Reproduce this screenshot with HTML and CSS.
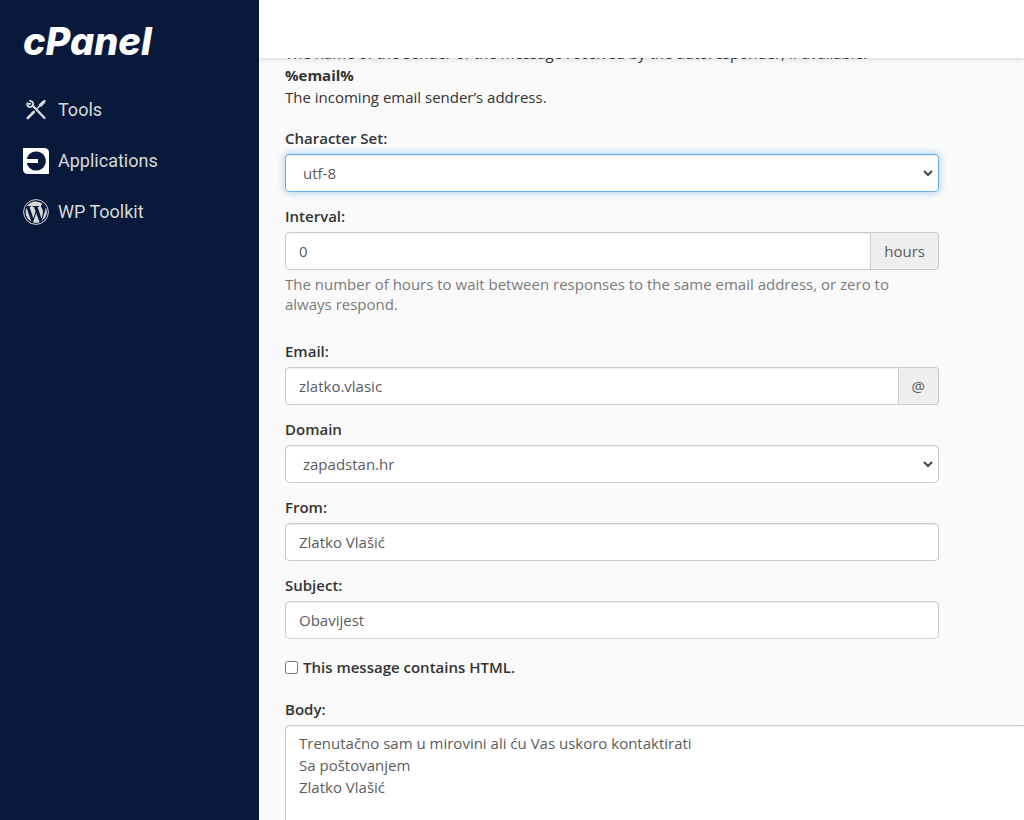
FILE: index.html
```html
<!DOCTYPE html>
<html lang="en">
<head>
<meta charset="utf-8">
<title>cPanel</title>
<link rel="stylesheet" href="styles.css">
</head>
<body>
<div class="app">
  <aside class="sidebar">
    <a class="logo" href="#">cPanel</a>
    <nav class="nav">
      <a class="nav-link" href="#">
        <svg class="nav-icon" viewBox="0 0 26 26" fill="none" stroke="#d9d9d9" aria-hidden="true">
          <path d="M9.5 8.5 21.5 21" stroke-width="2.4" stroke-linecap="round"/>
          <path d="M4.2 6.4c-.6 2.3 1.5 4.2 3.7 3.5 2.3-.6 3.1-3.1 1.7-4.8-.8-1-1.8-1.3-2.6-1.2" stroke-width="1.8" stroke-linecap="round"/>
          <path d="M4.3 6.2 6.7 7.3 7.7 6" stroke-width="1.5"/>
          <path d="M4.8 21 10.8 15" stroke-width="2.6" stroke-linecap="round"/>
          <path d="M14 11.8 17.5 8.3" stroke-width="1.6"/>
          <path d="M16.2 7.6 20 4 22.2 3.4 21.7 5.7 18 9.5Z" fill="#d9d9d9" stroke-width="1" stroke-linejoin="round"/>
        </svg>
        <span>Tools</span>
      </a>
      <a class="nav-link" href="#">
        <svg class="nav-icon" viewBox="0 0 26 26" aria-hidden="true">
          <path d="M0 0H21.5A4.5 4.5 0 0 1 26 4.5V26H4.5A4.5 4.5 0 0 1 0 21.5Z" fill="#fff"/>
          <path d="M3.8 11A9.6 9.6 0 1 1 3.8 15H15V11Z" fill="#08193b"/>
          <path d="M3 11.2H14.5V14.8H3Z" fill="#fff"/>
        </svg>
        <span>Applications</span>
      </a>
      <a class="nav-link" href="#">
        <svg class="nav-icon" viewBox="0 0 26 26" aria-hidden="true">
          <circle cx="13" cy="13" r="12.4" fill="none" stroke="#d9d9d9" stroke-width="1"/>
          <path fill="#d9d9d9" d="M3.6 8.7A10.8 10.8 0 0 0 8.3 22.7ZM19.9 12.4c0-1.3-.5-2.2-.9-2.9-.5-.9-1-1.6-1-2.5 0-1 .7-1.900 1.800-1.900h.1A10.800 10.800 0 0 0 4 7.100h.7c1.100 0 2.900-.1 2.900-.1.600 0 .6.800.1.900l-1.200.1 3.800 11.500 2.300-6.900L11 8l-1.100-.1c-.6 0-.5-.9.100-.9 0 0 1.700.1 2.800.1 1.100 0 2.900-.1 2.900-.1.600 0 .6.800.1.900l-1.200.1 3.800 11.400 1.100-3.500c.4-1.400.4-2.500.4-3.500ZM13.200 13.900 10 23.400c2.200.6 4.500.5 6.600-.2ZM22.500 7.800c.3 1.900-.2 3.700-.7 5.200l-3.300 9.300A10.800 10.800 0 0 0 22.500 7.800Z"/>
        </svg>
        <span>WP Toolkit</span>
      </a>
    </nav>
  </aside>
  <div class="main">
    <header class="topbar"></header>
    <main class="content">
      <dl class="tags">
        <dd>The name of the sender of the message received by the autoresponder, if available.</dd>
        <dt>%email%</dt>
        <dd>The incoming email sender’s address.</dd>
      </dl>
      <form class="form">
        <div class="field">
          <label for="charset">Character Set:</label>
          <div class="select-wrap">
            <select class="control focused" id="charset"><option>utf-8</option></select>
            <svg class="chevron" viewBox="0 0 10 6" aria-hidden="true"><path d="M1 1 5 5 9 1"/></svg>
          </div>
        </div>
        <div class="field">
          <label for="interval">Interval:</label>
          <div class="group">
            <input class="control" id="interval" type="text" value="0">
            <span class="addon">hours</span>
          </div>
          <p class="help">The number of hours to wait between responses to the same email address, or zero to always respond.</p>
        </div>
        <div class="field">
          <label for="email">Email:</label>
          <div class="group">
            <input class="control" id="email" type="text" value="zlatko.vlasic">
            <span class="addon">@</span>
          </div>
        </div>
        <div class="field">
          <label for="domain">Domain</label>
          <div class="select-wrap">
            <select class="control" id="domain"><option>zapadstan.hr</option></select>
            <svg class="chevron" viewBox="0 0 10 6" aria-hidden="true"><path d="M1 1 5 5 9 1"/></svg>
          </div>
        </div>
        <div class="field">
          <label for="from">From:</label>
          <input class="control" id="from" type="text" value="Zlatko Vlašić">
        </div>
        <div class="field">
          <label for="subject">Subject:</label>
          <input class="control" id="subject" type="text" value="Obavijest">
        </div>
        <div class="check">
          <input id="html" type="checkbox">
          <label for="html">This message contains HTML.</label>
        </div>
        <div class="field field-body">
          <label for="body">Body:</label>
          <textarea class="control" id="body">Trenutačno sam u mirovini ali ću Vas uskoro kontaktirati
Sa poštovanjem
Zlatko Vlašić</textarea>
        </div>
      </form>
    </main>
  </div>
</div>
</body>
</html>
```
FILE: styles.css
```css
* {
  box-sizing: border-box;
}

body {
  margin: 0;
  font: 15px/22px "Open Sans", "Noto Sans", sans-serif;
  color: #333;
  background: #fafafa;
}

.app {
  display: flex;
  height: 100vh;
  overflow: hidden;
}

.sidebar {
  flex: 0 0 259px;
  padding: 19px 23px;
  background: #08193b;
}

.logo {
  display: block;
  color: #fff;
  font: italic 800 38px/44px Inter, sans-serif;
  text-decoration: none;
}

.nav {
  display: flex;
  flex-direction: column;
  gap: 25px;
  margin-top: 34px;
}

.nav-link {
  display: flex;
  align-items: center;
  gap: 9px;
  color: #d9d9d9;
  font: 18px/26px Roboto, sans-serif;
  text-decoration: none;
}

.nav-icon {
  width: 26px;
  height: 26px;
}

.main {
  flex: 1;
  min-width: 0;
  display: flex;
  flex-direction: column;
}

.topbar {
  flex: 0 0 58px;
  position: relative;
  z-index: 1;
  background: #fff;
  box-shadow: 0 1px 5px rgba(0, 0, 0, 0.15);
}

.content {
  flex: 1;
  display: flex;
  flex-direction: column;
  margin-top: -16px;
  padding-left: 26px;
}

.tags {
  margin: 0 0 19px;
}

.tags dt {
  font-weight: 700;
}

.tags dd {
  margin: 0;
}

.form {
  flex: 1;
  display: flex;
  flex-direction: column;
}

.field {
  display: flex;
  flex-direction: column;
  max-width: 654px;
  margin-bottom: 13px;
}

.field label,
.check label {
  font-weight: 600;
}

.field label {
  margin-bottom: 5px;
}

.control {
  width: 100%;
  height: 38px;
  margin: 0;
  padding: 0 13px;
  border: 1px solid #ccc;
  border-radius: 4px;
  outline: 0;
  background: #fff;
  box-shadow: inset 0 1px 1px rgba(0, 0, 0, 0.075);
  color: #5c5c5c;
  font: inherit;
}

select.control {
  padding: 0 17px;
  appearance: none;
}

.focused {
  border-color: #66afe9;
  box-shadow: inset 0 1px 1px rgba(0, 0, 0, 0.075), 0 0 8px rgba(102, 175, 233, 0.6);
}

.select-wrap {
  position: relative;
  display: flex;
}

.chevron {
  position: absolute;
  top: 16px;
  right: 6px;
  width: 10px;
  height: 6px;
  fill: none;
  stroke: #444;
  stroke-width: 2;
  pointer-events: none;
}

.group {
  display: flex;
}

.group .control {
  flex: 1;
  min-width: 0;
  border-radius: 4px 0 0 4px;
}

.addon {
  display: flex;
  align-items: center;
  padding: 0 13px;
  border: 1px solid #ccc;
  border-left: 0;
  border-radius: 0 4px 4px 0;
  background: #eee;
  color: #5c5c5c;
}

.help {
  margin: 4px 0 13px;
  color: #7a7a7a;
  line-height: 20px;
}

.check {
  display: flex;
  align-items: center;
  gap: 5px;
  margin: 4px 0 20px;
}

.check input {
  width: 13px;
  height: 13px;
  margin: 0;
}

.field-body {
  flex: 1;
  max-width: none;
  margin-bottom: 0;
}

textarea.control {
  flex: 1;
  min-height: 95px;
  padding: 6px 13px;
  border-width: 1px 0 0 1px;
  border-radius: 4px 0 0 0;
  resize: none;
}
```
